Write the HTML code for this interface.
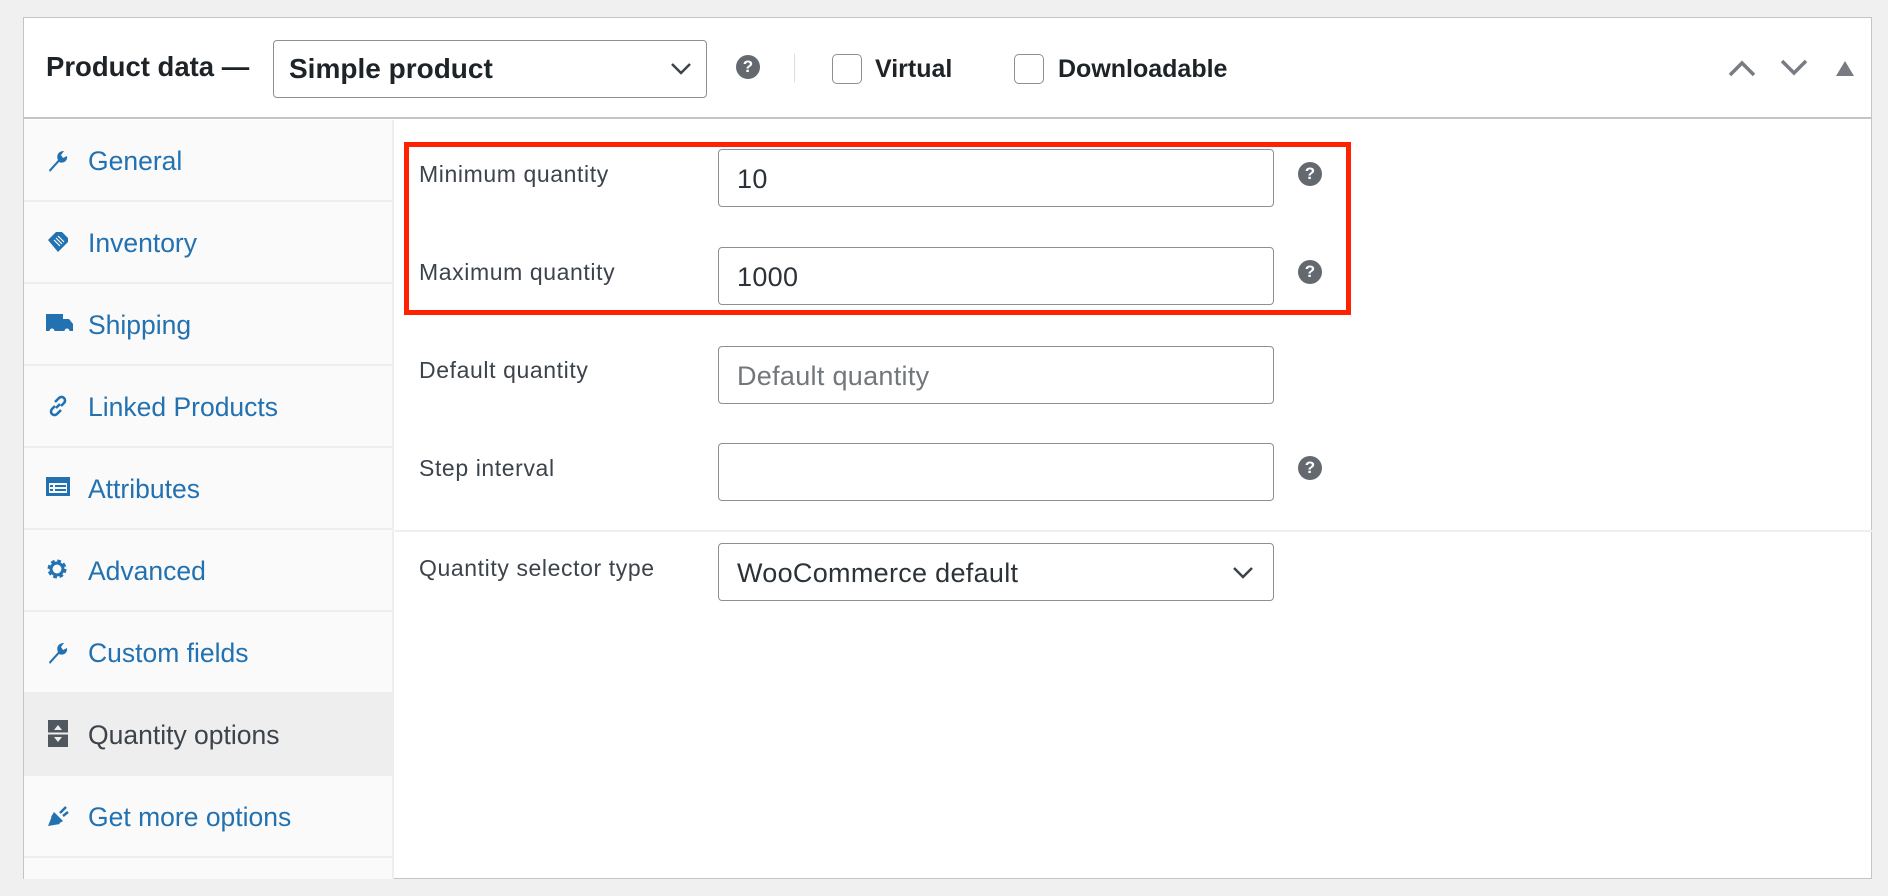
<!DOCTYPE html>
<html><head><meta charset="utf-8">
<style>
*{box-sizing:border-box;margin:0;padding:0}
body{width:1888px;height:896px;background:#f0f0f1;font-family:"Liberation Sans",sans-serif;position:relative;overflow:hidden}
.abs{position:absolute}
#panel{left:23px;top:17px;width:1849px;height:862px;background:#fff;border:1px solid #c3c4c7}
.hdr{left:0;top:0;width:100%;height:101px;border-bottom:2px solid #c3c4c7}
.t{position:absolute;white-space:nowrap;line-height:1}
.side{left:0;top:102px;width:370px;height:759px;background:#fafafa;border-right:2px solid #eee}
.item{position:absolute;left:0;width:368px;height:82px;border-bottom:2px solid #eee}
.item span{position:absolute;left:64px;top:28px;font-size:26.5px;color:#2271b1;line-height:1;white-space:nowrap}
.item svg{position:absolute;left:22px;top:28px}
.lbl{position:absolute;left:395px;font-size:23px;letter-spacing:0.6px;color:#3c434a;line-height:1;white-space:nowrap}
.inp{position:absolute;left:694px;width:556px;height:58px;border:1.5px solid #8c8f94;border-radius:4px;font-size:27px;letter-spacing:0.3px;color:#2c3338;padding:16px 0 0 18px;line-height:1;white-space:nowrap}
.help{position:absolute;left:1274px;width:24px;height:24px;border-radius:50%;background:#646970;color:#fff;font-size:17px;font-weight:bold;text-align:center;line-height:24px}
.cb{position:absolute;width:30px;height:30px;border:1.5px solid #8c8f94;border-radius:5px;background:#fff}
</style></head><body>
<div id="panel" class="abs">
 <div class="abs hdr">
  <div class="t" style="left:22px;top:35px;font-size:27.5px;font-weight:bold;color:#1d2327">Product data —</div>
  <div class="abs" style="left:249px;top:22px;width:434px;height:58px;border:1.5px solid #8c8f94;border-radius:4px">
   <div class="t" style="left:15px;top:14px;font-size:28px;font-weight:bold;color:#1d2327">Simple product</div>
   <svg class="abs" style="left:396px;top:21px" width="22" height="14" viewBox="0 0 22 14"><path d="M2 2l9 9 9-9" stroke="#3c434a" stroke-width="2.5" fill="none"/></svg>
  </div>
  <div class="help" style="left:712px;top:37px">?</div>
  <div class="abs" style="left:770px;top:36px;width:1px;height:28px;background:#ddd"></div>
  <div class="cb" style="left:808px;top:36px"></div>
  <div class="t" style="left:851px;top:39px;font-size:25px;font-weight:bold;color:#1d2327">Virtual</div>
  <div class="cb" style="left:990px;top:36px"></div>
  <div class="t" style="left:1034px;top:39px;font-size:25px;font-weight:bold;color:#1d2327">Downloadable</div>
  <svg class="abs" style="left:1704px;top:41px" width="28" height="18" viewBox="0 0 28 18"><path d="M2 16L14 4l12 12" stroke="#787c82" stroke-width="3.5" fill="none"/></svg>
  <svg class="abs" style="left:1756px;top:41px" width="28" height="18" viewBox="0 0 28 18"><path d="M2 2l12 12L26 2" stroke="#787c82" stroke-width="3.5" fill="none"/></svg>
  <svg class="abs" style="left:1812px;top:43px" width="18" height="15" viewBox="0 0 18 15"><path d="M9 0L18 15H0z" fill="#787c82"/></svg>
 </div>
 <div class="abs side">
  <div class="item" style="top:0"><svg width="22" height="24" viewBox="0 0 22 24"><path d="M3 22l9-10c-2-4 0-9 6-9l-3 4 2 3 4-2c1 5-4 8-8 6L4 24z" fill="#2271b1"/></svg><span>General</span></div>
  <div class="item" style="top:82px"><svg width="24" height="24" viewBox="0 0 24 24"><path d="M2 10L10 2h6l6 6v4l-10 10z" fill="#2271b1"/><path d="M8 10l6 6M10 8l6 6M12 6l6 6" stroke="#fff" stroke-width="1.2"/></svg><span>Inventory</span></div>
  <div class="item" style="top:164px"><svg width="27" height="22" viewBox="0 0 27 22"><path d="M0 2h17v5h6l4 5v7H0z" fill="#2271b1"/><circle cx="6" cy="19" r="2.5" fill="#fafafa"/><circle cx="21" cy="19" r="2.5" fill="#fafafa"/></svg><span>Shipping</span></div>
  <div class="item" style="top:246px"><svg width="24" height="24" viewBox="0 0 24 24"><path d="M10 14l4-4M9 8l4-4a3.5 3.5 0 015 5l-3 3M15 16l-4 4a3.5 3.5 0 01-5-5l3-3" stroke="#2271b1" stroke-width="2.6" fill="none"/></svg><span>Linked Products</span></div>
  <div class="item" style="top:328px"><svg width="24" height="22" viewBox="0 0 24 22"><rect x="0" y="1" width="24" height="19" fill="#2271b1"/><rect x="3" y="7" width="18" height="10" fill="#fafafa"/><path d="M4 10h3M9 10h11M4 14h3M9 14h11" stroke="#2271b1" stroke-width="2"/></svg><span>Attributes</span></div>
  <div class="item" style="top:410px"><svg width="22" height="22" viewBox="0 0 22 22"><circle cx="11" cy="11" r="7" fill="none" stroke="#2271b1" stroke-width="5" stroke-dasharray="3.2 2.3"/><circle cx="11" cy="11" r="6" fill="none" stroke="#2271b1" stroke-width="3"/></svg><span>Advanced</span></div>
  <div class="item" style="top:492px"><svg width="22" height="24" viewBox="0 0 22 24"><path d="M3 22l9-10c-2-4 0-9 6-9l-3 4 2 3 4-2c1 5-4 8-8 6L4 24z" fill="#2271b1"/></svg><span>Custom fields</span></div>
  <div class="item" style="top:574px;background:#eee"><svg width="24" height="28" viewBox="0 0 24 28" style="top:26px"><rect x="2" y="0" width="20" height="27" fill="#50575e"/><path d="M0 13.5h24" stroke="#eee" stroke-width="2"/><path d="M8 10l4-5 4 5zM8 17l4 5 4-5z" fill="#eee"/></svg><span style="color:#3c434a">Quantity options</span></div>
  <div class="item" style="top:656px"><svg width="24" height="24" viewBox="0 0 24 24"><path d="M2 22l4-10 8 8z" fill="#2271b1"/><path d="M8 8l9 9-5 3-7-7z" fill="#2271b1"/><path d="M14 9l6-6M17 12l5-4" stroke="#2271b1" stroke-width="2.5"/></svg><span>Get more options</span></div>
 </div>
 <div class="abs" style="left:371px;top:512px;width:1477px;height:2px;background:#eee"></div>
 <div class="abs" style="left:380px;top:124px;width:947px;height:173px;border:5px solid #ff2200"></div>
 <div class="lbl" style="top:145px">Minimum quantity</div>
 <div class="inp" style="top:131px">10</div>
 <div class="help" style="top:144px">?</div>
 <div class="lbl" style="top:243px">Maximum quantity</div>
 <div class="inp" style="top:229px">1000</div>
 <div class="help" style="top:242px">?</div>
 <div class="lbl" style="top:341px">Default quantity</div>
 <div class="inp" style="top:328px;color:#72777c">Default quantity</div>
 <div class="lbl" style="top:439px">Step interval</div>
 <div class="inp" style="top:425px"></div>
 <div class="help" style="top:438px">?</div>
 <div class="lbl" style="top:539px">Quantity selector type</div>
 <div class="inp" style="top:525px">WooCommerce default
  <svg class="abs" style="left:513px;top:22px" width="22" height="14" viewBox="0 0 22 14"><path d="M2 2l9 9 9-9" stroke="#3c434a" stroke-width="2.5" fill="none"/></svg>
 </div>
</div>
</body></html>
